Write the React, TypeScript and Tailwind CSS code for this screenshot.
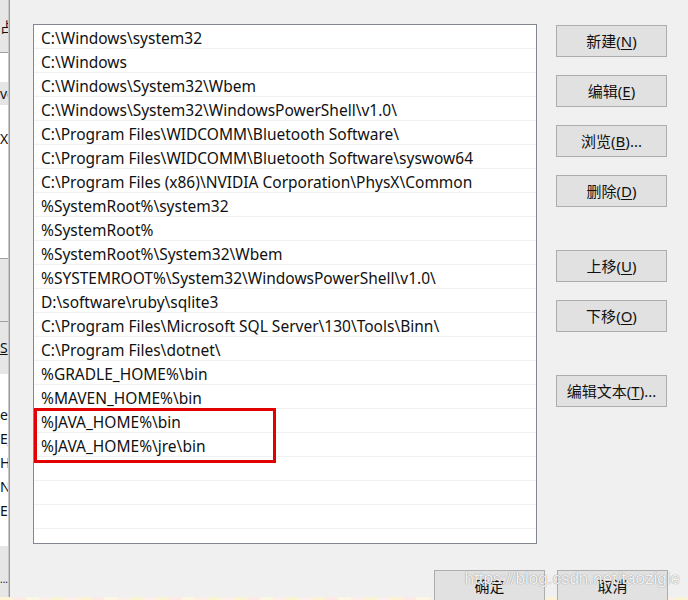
import React from "react";

const rows = [
  "C:\\Windows\\system32",
  "C:\\Windows",
  "C:\\Windows\\System32\\Wbem",
  "C:\\Windows\\System32\\WindowsPowerShell\\v1.0\\",
  "C:\\Program Files\\WIDCOMM\\Bluetooth Software\\",
  "C:\\Program Files\\WIDCOMM\\Bluetooth Software\\syswow64",
  "C:\\Program Files (x86)\\NVIDIA Corporation\\PhysX\\Common",
  "%SystemRoot%\\system32",
  "%SystemRoot%",
  "%SystemRoot%\\System32\\Wbem",
  "%SYSTEMROOT%\\System32\\WindowsPowerShell\\v1.0\\",
  "D:\\software\\ruby\\sqlite3",
  "C:\\Program Files\\Microsoft SQL Server\\130\\Tools\\Binn\\",
  "C:\\Program Files\\dotnet\\",
  "%GRADLE_HOME%\\bin",
  "%MAVEN_HOME%\\bin",
  "%JAVA_HOME%\\bin",
  "%JAVA_HOME%\\jre\\bin",
  "",
  "",
  "",
];

function Btn({ label, u, tail = "", className = "" }: { label: string; u?: string; tail?: string; className?: string }) {
  return (
    <div
      className={
        "w-[111px] h-[32px] flex items-center justify-center border border-[#adadad] bg-[#e1e1e1] text-[15px] text-[#111] " +
        className
      }
    >
      <span>
        {label}
        {u ? (
          <>
            (<span className="underline underline-offset-2">{u}</span>)
          </>
        ) : null}
        {tail}
      </span>
    </div>
  );
}

const stripColors = [
  "bg-[#fbf3d6]",
  "bg-[#fde9e6]",
  "bg-[#fbf7e2]",
  "bg-[#fceee8]",
  "bg-[#f9f5d4]",
  "bg-[#fdf0ec]",
];

export default function App() {
  return (
    <div
      className="w-[688px] h-[600px] overflow-hidden flex flex-col bg-[#f0f0f0]"
      style={{ fontFamily: '"Noto Sans", "Noto Sans CJK SC", sans-serif' }}
    >
      <div className="flex flex-1 min-h-0">
        {/* left strip: part of another window */}
        <div className="w-[9px] shrink-0 flex flex-col overflow-hidden text-[14px] text-[#111] leading-none border-r border-[#c8c8c8]">
          <div className="h-[53px] shrink-0 bg-[#e6e6e6] border-b border-[#a0a0a0] pt-[20px] whitespace-nowrap">占</div>
          <div className="h-[205px] shrink-0 bg-white flex flex-col">
            <div className="mt-[29px] h-[23px] bg-[#e5e5e5] flex items-center whitespace-nowrap">ve</div>
            <div className="mt-[27px] whitespace-nowrap">X</div>
          </div>
          <div className="h-[64px] shrink-0 bg-[#e6e6e6] border-t border-[#a0a0a0] border-b" />
          <div className="h-[52px] shrink-0 bg-[#e6e6e6] flex items-center whitespace-nowrap underline">S</div>
          <div className="h-[172px] shrink-0 bg-white flex flex-col pt-[34px] gap-[10px] whitespace-nowrap">
            <div>e</div>
            <div>E_</div>
            <div>HO</div>
            <div>N_</div>
            <div>ER</div>
          </div>
          <div className="flex-1 bg-[#e6e6e6] pt-[28px] text-[10px] whitespace-nowrap">...</div>
        </div>
        <div className="w-[1px] shrink-0 bg-[#9a9a9a]" />

        {/* dialog body */}
        <div className="flex-1 flex flex-col pl-[23px] pt-[24px] relative">
          <div className="flex">
            <div className="relative w-[504px] h-[520px] border border-[#828790] bg-white overflow-hidden">
              {rows.map((r, i) => (
                <div
                  key={i}
                  className="h-[24px] border-b border-[#f0f0f0] pl-[7px] flex items-center pt-[4px] text-[15.5px] text-[#111] whitespace-nowrap"
                >
                  {r}
                </div>
              ))}
              <div className="absolute left-0 top-[383px] w-[242px] h-[55px] border-[3px] border-[#e30000]" />
            </div>
            <div className="ml-[19px] pt-[1px] flex flex-col">
              <Btn label="新建" u="N" />
              <Btn label="编辑" u="E" className="mt-[18px]" />
              <Btn label="浏览" u="B" tail="..." className="mt-[18px]" />
              <Btn label="删除" u="D" className="mt-[18px]" />
              <Btn label="上移" u="U" className="mt-[43px]" />
              <Btn label="下移" u="O" className="mt-[18px]" />
              <Btn label="编辑文本" u="T" tail="..." className="mt-[43px]" />
            </div>
          </div>
          <div className="flex justify-end gap-[12px] pr-[20px] mt-[26px]">
            <Btn label="确定" className="w-[110px]" />
            <Btn label="取消" />
          </div>
          <div className="absolute right-[8px] bottom-[6px] text-[17px] text-white/90 whitespace-nowrap [text-shadow:0_0_1px_#6a6a6a]" style={{ fontFamily: '"Liberation Sans", sans-serif' }}>
            https://blog.csdn.net/taozigie
          </div>
        </div>
      </div>
      <div className="h-[3px] shrink-0 flex">
        {Array.from({ length: 53 }).map((_, i) => (
          <div key={i} className={"w-[13px] h-full shrink-0 " + stripColors[i % stripColors.length]} />
        ))}
      </div>
    </div>
  );
}
